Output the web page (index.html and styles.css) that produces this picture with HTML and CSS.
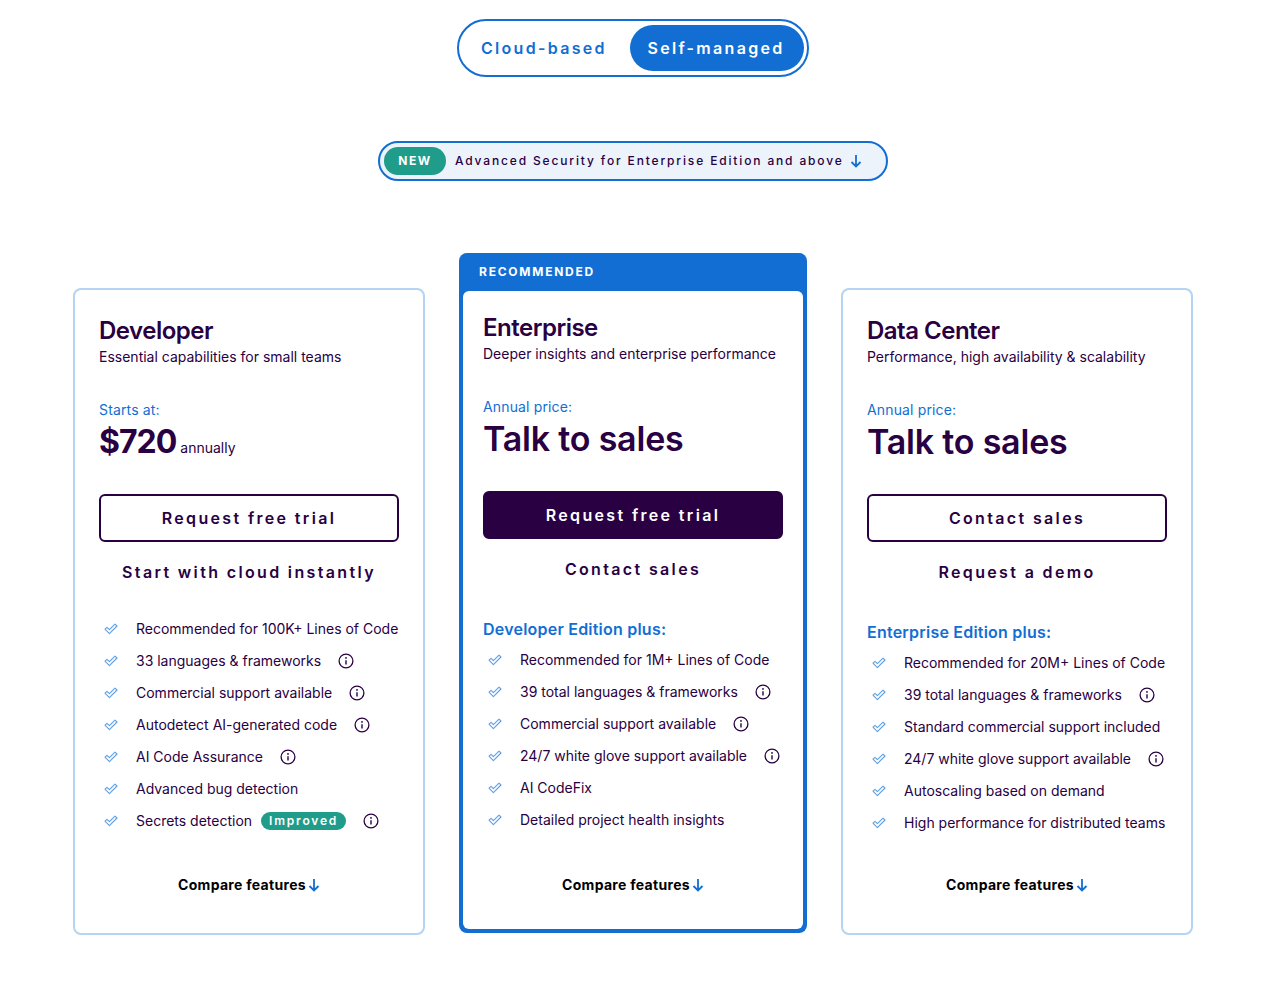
FILE: index.html
```html
<!DOCTYPE html>
<html lang="en">
<head>
    <meta charset="UTF-8" />
    <meta name="viewport" content="width=device-width, initial-scale=1.0" />
    <title>Pricing</title>
    <link rel="stylesheet" href="styles.css">
</head>
<body>
    <svg class="sprite" width="0" height="0" aria-hidden="true">
        <symbol id="check" viewBox="0 0 14 12">
            <path d="M1 6.2 L3 4.4 L5.4 6.6 L11 1.2 L13 3 L5.4 10.6 Z" fill="none" stroke="currentColor" stroke-width="1.1" stroke-linejoin="round" />
        </symbol>
        <symbol id="info" viewBox="0 0 16 16">
            <circle cx="8" cy="8" r="6.9" fill="none" stroke="currentColor" stroke-width="1.3" />
            <path d="M8 7.2 V11.6" stroke="currentColor" stroke-width="1.4" />
            <circle cx="8" cy="4.9" r="0.9" fill="currentColor" />
        </symbol>
        <symbol id="arrow" viewBox="0 0 12 14">
            <path d="M6 1 V12.5 M1.5 8 L6 12.5 L10.5 8" fill="none" stroke="currentColor" stroke-width="1.8" />
        </symbol>
    </svg>

    <main class="page">
        <div class="toggle">
            <a class="toggle-item">Cloud-based</a>
            <a class="toggle-item active">Self-managed</a>
        </div>

        <div class="banner">
            <span class="banner-tag">NEW</span>
            <span class="banner-text">Advanced Security for Enterprise Edition and above</span>
            <svg class="banner-arrow"><use href="#arrow" /></svg>
        </div>

        <section class="plans">
            <article class="card card-side">
                <h2>Developer</h2>
                <p class="tagline">Essential capabilities for small teams</p>
                <p class="price-label">Starts at:</p>
                <p class="price price-num">$720<small>annually</small></p>
                <a class="btn btn-outline">Request free trial</a>
                <a class="link">Start with cloud instantly</a>
                <ul class="features">
                    <li><svg class="check"><use href="#check" /></svg>Recommended for 100K+ Lines of Code</li>
                    <li><svg class="check"><use href="#check" /></svg>33 languages &amp; frameworks<svg class="info"><use href="#info" /></svg></li>
                    <li><svg class="check"><use href="#check" /></svg>Commercial support available<svg class="info"><use href="#info" /></svg></li>
                    <li><svg class="check"><use href="#check" /></svg>Autodetect AI-generated code<svg class="info"><use href="#info" /></svg></li>
                    <li><svg class="check"><use href="#check" /></svg>AI Code Assurance<svg class="info"><use href="#info" /></svg></li>
                    <li><svg class="check"><use href="#check" /></svg>Advanced bug detection</li>
                    <li><svg class="check"><use href="#check" /></svg>Secrets detection<span class="tag">Improved</span><svg class="info"><use href="#info" /></svg></li>
                </ul>
                <a class="compare">Compare features<svg class="compare-arrow"><use href="#arrow" /></svg></a>
            </article>

            <article class="featured">
                <div class="featured-label">RECOMMENDED</div>
                <div class="card card-main">
                    <h2>Enterprise</h2>
                    <p class="tagline">Deeper insights and enterprise performance</p>
                    <p class="price-label">Annual price:</p>
                    <p class="price">Talk to sales</p>
                    <a class="btn btn-solid">Request free trial</a>
                    <a class="link">Contact sales</a>
                    <h3>Developer Edition plus:</h3>
                    <ul class="features">
                        <li><svg class="check"><use href="#check" /></svg>Recommended for 1M+ Lines of Code</li>
                        <li><svg class="check"><use href="#check" /></svg>39 total languages &amp; frameworks<svg class="info"><use href="#info" /></svg></li>
                        <li><svg class="check"><use href="#check" /></svg>Commercial support available<svg class="info"><use href="#info" /></svg></li>
                        <li><svg class="check"><use href="#check" /></svg>24/7 white glove support available<svg class="info"><use href="#info" /></svg></li>
                        <li><svg class="check"><use href="#check" /></svg>AI CodeFix</li>
                        <li><svg class="check"><use href="#check" /></svg>Detailed project health insights</li>
                    </ul>
                    <a class="compare">Compare features<svg class="compare-arrow"><use href="#arrow" /></svg></a>
                </div>
            </article>

            <article class="card card-side">
                <h2>Data Center</h2>
                <p class="tagline">Performance, high availability &amp; scalability</p>
                <p class="price-label">Annual price:</p>
                <p class="price">Talk to sales</p>
                <a class="btn btn-outline">Contact sales</a>
                <a class="link">Request a demo</a>
                <h3>Enterprise Edition plus:</h3>
                <ul class="features">
                    <li><svg class="check"><use href="#check" /></svg>Recommended for 20M+ Lines of Code</li>
                    <li><svg class="check"><use href="#check" /></svg>39 total languages &amp; frameworks<svg class="info"><use href="#info" /></svg></li>
                    <li><svg class="check"><use href="#check" /></svg>Standard commercial support included</li>
                    <li><svg class="check"><use href="#check" /></svg>24/7 white glove support available<svg class="info"><use href="#info" /></svg></li>
                    <li><svg class="check"><use href="#check" /></svg>Autoscaling based on demand</li>
                    <li><svg class="check"><use href="#check" /></svg>High performance for distributed teams</li>
                </ul>
                <a class="compare">Compare features<svg class="compare-arrow"><use href="#arrow" /></svg></a>
            </article>
        </section>
    </main>
</body>
</html>
```

FILE: styles.css
```css
body {
    margin: 0;
    font-family: Inter, "Liberation Sans", sans-serif;
    background-color: #fff;
    color: #290042;
}

.sprite {
    position: absolute;
}

.page {
    width: 1266px;
    height: 985px;
    padding-top: 19px;
    box-sizing: border-box;
    display: flex;
    flex-direction: column;
    align-items: center;
}

/* toggle */
.toggle {
    display: flex;
    align-items: center;
    justify-content: space-between;
    width: 352px;
    height: 58px;
    box-sizing: border-box;
    padding: 0 3px 0 22px;
    border: 2px solid #126ed3;
    border-radius: 29px;
}

.toggle-item {
    font-size: 16px;
    font-weight: 600;
    letter-spacing: 2.3px;
    color: #126ed3;
}

.toggle-item.active {
    width: 174px;
    height: 46px;
    line-height: 46px;
    padding-right: 2px;
    box-sizing: border-box;
    text-align: center;
    border-radius: 23px;
    background-color: #126ed3;
    color: #fff;
}

/* banner */
.banner {
    display: flex;
    align-items: center;
    width: 510px;
    height: 40px;
    box-sizing: border-box;
    margin-top: 64px;
    padding: 0 4px;
    border: 2px solid #126ed3;
    border-radius: 20px;
    background-color: #ecf3fb;
}

.banner-tag {
    width: 62px;
    height: 28px;
    line-height: 28px;
    text-align: center;
    border-radius: 14px;
    background-color: #1f9c8a;
    color: #fff;
    font-size: 12px;
    font-weight: 700;
    letter-spacing: 1.6px;
}

.banner-text {
    margin: 0 0 1px 9px;
    font-size: 12px;
    font-weight: 500;
    letter-spacing: 1.85px;
}

.banner-arrow {
    width: 12px;
    height: 14px;
    margin-left: 6px;
    color: #126ed3;
}

/* plans */
.plans {
    display: flex;
    align-items: flex-start;
    gap: 34px;
    width: 1120px;
    margin-top: 72px;
}

.card {
    display: flex;
    flex-direction: column;
    box-sizing: border-box;
    background-color: #fff;
}

.card-side {
    width: 352px;
    height: 647px;
    margin-top: 35px;
    padding: 26px 24px 0;
    border: 2px solid #b5d3f2;
    border-radius: 8px;
}

.featured {
    width: 348px;
    height: 680px;
    box-sizing: border-box;
    display: flex;
    flex-direction: column;
    border: 4px solid #126ed3;
    border-top: 0;
    border-radius: 8px;
    background-color: #126ed3;
}

.featured-label {
    height: 38px;
    line-height: 37px;
    padding-left: 16px;
    color: #fff;
    font-size: 12px;
    font-weight: 700;
    letter-spacing: 1.75px;
}

.card-main {
    flex: 1;
    padding: 22px 20px 0;
    border-radius: 6px;
}

h2 {
    margin: 0;
    font-size: 24px;
    line-height: 30px;
    font-weight: 600;
    letter-spacing: -0.5px;
}

.tagline {
    margin: 1px 0 0;
    font-size: 14px;
    line-height: 20px;
}

.price-label {
    margin: 33px 0 0;
    font-size: 14px;
    line-height: 20px;
    letter-spacing: 0.15px;
    color: #126ed3;
}

.price {
    margin: 2px 0 0;
    font-size: 34px;
    line-height: 40px;
    font-weight: 600;
    letter-spacing: -0.2px;
}

.price-num {
    font-size: 32px;
    font-weight: 700;
    letter-spacing: -1px;
}

.price small {
    margin-left: 4px;
    font-size: 14px;
    line-height: 1;
    font-weight: 400;
    letter-spacing: 0;
}

.btn {
    display: block;
    box-sizing: border-box;
    width: 300px;
    height: 48px;
    line-height: 44px;
    margin-top: 32px;
    text-align: center;
    border: 2px solid #290042;
    border-radius: 6px;
    font-size: 16px;
    font-weight: 600;
    letter-spacing: 2.35px;
}

.btn-solid {
    background-color: #290042;
    color: #fff;
}

.link {
    display: block;
    margin-top: 20px;
    text-align: center;
    font-size: 16px;
    line-height: 20px;
    font-weight: 600;
    letter-spacing: 2.35px;
}

h3 {
    margin: 40px 0 0;
    font-size: 16px;
    line-height: 20px;
    font-weight: 600;
    letter-spacing: 0.22px;
    color: #126ed3;
}

.features {
    list-style: none;
    margin: 30px 0 0;
    padding: 0;
}

h3 + .features {
    margin-top: 4px;
}

.features li {
    display: flex;
    align-items: center;
    height: 32px;
    font-size: 14px;
    white-space: nowrap;
}

.check {
    flex: none;
    width: 14px;
    height: 12px;
    margin: 1px 18px 0 5px;
    color: #5f9fe3;
}

.info {
    flex: none;
    width: 16px;
    height: 16px;
    margin: 2px 0 0 17px;
}

.tag {
    height: 18px;
    line-height: 17px;
    margin: 1px 0 0 9px;
    padding: 0 8px;
    border-radius: 9px;
    background-color: #1f9c8a;
    color: #fff;
    font-size: 12px;
    font-weight: 600;
    letter-spacing: 1.8px;
}

.compare {
    display: flex;
    align-items: center;
    justify-content: center;
    margin-top: auto;
    margin-bottom: 39px;
    height: 20px;
    font-size: 14px;
    font-weight: 700;
    letter-spacing: 0.3px;
    color: #000;
}

.card-main .compare {
    margin-bottom: 35px;
}

.compare-arrow {
    width: 12px;
    height: 14px;
    margin: 1px 0 0 2px;
    color: #126ed3;
}
```
